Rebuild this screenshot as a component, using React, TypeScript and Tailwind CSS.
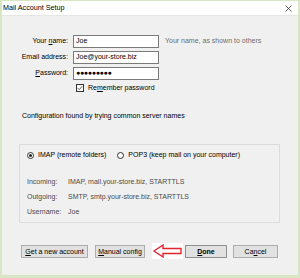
import React from 'react';

const font = { fontFamily: '"Liberation Sans", Arial, sans-serif' };

function Field({ label, accessIndex, value, password }: { label: string; accessIndex: number; value: string; password?: boolean }) {
  return (
    <div className="flex items-center h-[13px]">
      <label className="w-[71px] text-right pr-[5px] text-[7px] text-black whitespace-nowrap">
        {label.slice(0, accessIndex)}
        <span className="underline">{label[accessIndex]}</span>
        {label.slice(accessIndex + 1)}
      </label>
      <div
        className={`w-[86px] h-[13px] bg-white border border-[#7a7a7a] px-[2px] flex items-center text-black whitespace-nowrap overflow-hidden ${
          password ? 'text-[7px] font-bold tracking-[-0.3px]' : 'text-[7px]'
        }`}
      >
        {value}
      </div>
    </div>
  );
}

function Btn({ w, children, bold }: { w: string; children: React.ReactNode; bold?: boolean }) {
  return (
    <button
      className={`${w} h-[13px] bg-[#e1e1e1] border ${bold ? 'border-[#8f8f8f] font-bold' : 'border-[#adadad]'} text-[7px] text-black flex items-center justify-center leading-none`}
    >
      {children}
    </button>
  );
}

export default function App() {
  return (
    <div style={font} className="w-[300px] h-[278px] bg-[#d8e6c3] pl-[2px] pr-[2px] pt-[1px] pb-[3px] flex flex-col overflow-hidden">
      <div className="h-[14px] bg-white flex items-center justify-between pr-[6px]">
        <span className="text-[7.2px] text-black pl-[1px]">Mail Account Setup</span>
        <svg width="7" height="7" viewBox="0 0 7 7">
          <path d="M0.5 0.5 L6.5 6.5 M6.5 0.5 L0.5 6.5" stroke="#333" strokeWidth="0.8" />
        </svg>
      </div>
      <div className="flex-1 bg-[#f0f0f0] border-t border-[#e6e6e6] flex flex-col">
        <div className="pt-[19px] flex flex-col gap-[3px]">
          <div className="flex items-center">
            <Field label="Your name:" accessIndex={5} value="Joe" />
            <span className="ml-[6px] text-[7px] text-[#6d6d6d] whitespace-nowrap">Your name, as shown to others</span>
          </div>
          <Field label="Email address:" accessIndex={20} value="Joe@your-store.biz" />
          <Field label="Password:" accessIndex={0} value="●●●●●●●●●" password />
        </div>

        <div className="flex items-center mt-[3px] ml-[74px] gap-[4px]">
          <div className="w-[8px] h-[8px] bg-white border border-[#333] flex items-center justify-center">
            <svg width="6" height="6" viewBox="0 0 6 6">
              <path d="M0.8 3.1 L2.3 4.6 L5.2 1.2" stroke="#333" strokeWidth="0.8" fill="none" />
            </svg>
          </div>
          <span className="text-[7px] text-black">
            Re<span className="underline">m</span>ember password
          </span>
        </div>

        <div className="mt-[17px] ml-[20px] text-[7px] text-black">Configuration found by trying common server names</div>

        <div className="mt-[23px] ml-[17px] mr-[18px] h-[79px] border border-[#dcdcdc] flex flex-col pl-[7px] pt-[5px]">
          <div className="flex items-center text-[7px] text-black">
            <div className="w-[7px] h-[7px] rounded-full border border-[#333] bg-white flex items-center justify-center">
              <div className="w-[3px] h-[3px] rounded-full bg-[#222]" />
            </div>
            <span className="ml-[4px]">IMAP (remote folders)</span>
            <div className="ml-[11px] w-[7px] h-[7px] rounded-full border border-[#333] bg-white" />
            <span className="ml-[4px]">POP3 (keep mail on your computer)</span>
          </div>
          <div className="mt-[16px] flex flex-col gap-[4.5px] text-[7px] text-[#4a4a4a]">
            <div className="flex">
              <span className="w-[41px]">Incoming:</span>
              <span>IMAP, mail.your-store.biz, STARTTLS</span>
            </div>
            <div className="flex">
              <span className="w-[41px]">Outgoing:</span>
              <span>SMTP, smtp.your-store.biz, STARTTLS</span>
            </div>
            <div className="flex">
              <span className="w-[41px]">Username:</span>
              <span>Joe</span>
            </div>
          </div>
        </div>

        <div className="mt-[20px] ml-[19px] flex items-center">
          <Btn w="w-[67px]">
            <span className="underline">G</span>et a new account
          </Btn>
          <div className="ml-[7px]">
            <Btn w="w-[50px]">
              <span className="underline">M</span>anual config
            </Btn>
          </div>
          <svg className="ml-[7px]" width="31" height="16" viewBox="0 0 31 16">
            <rect width="31" height="16" fill="#fff" />
            <path d="M2 8 L11 2 L11 5.5 L29 5.5 L29 10.5 L11 10.5 L11 14 Z" fill="#fff" stroke="#e3242b" strokeWidth="1.4" strokeLinejoin="miter" />
          </svg>
          <div className="ml-[2px]">
            <Btn w="w-[42px]" bold>
              <span className="underline">D</span>one
            </Btn>
          </div>
          <div className="ml-[6px]">
            <Btn w="w-[45px]">
              Ca<span className="underline">n</span>cel
            </Btn>
          </div>
        </div>
      </div>
    </div>
  );
}
